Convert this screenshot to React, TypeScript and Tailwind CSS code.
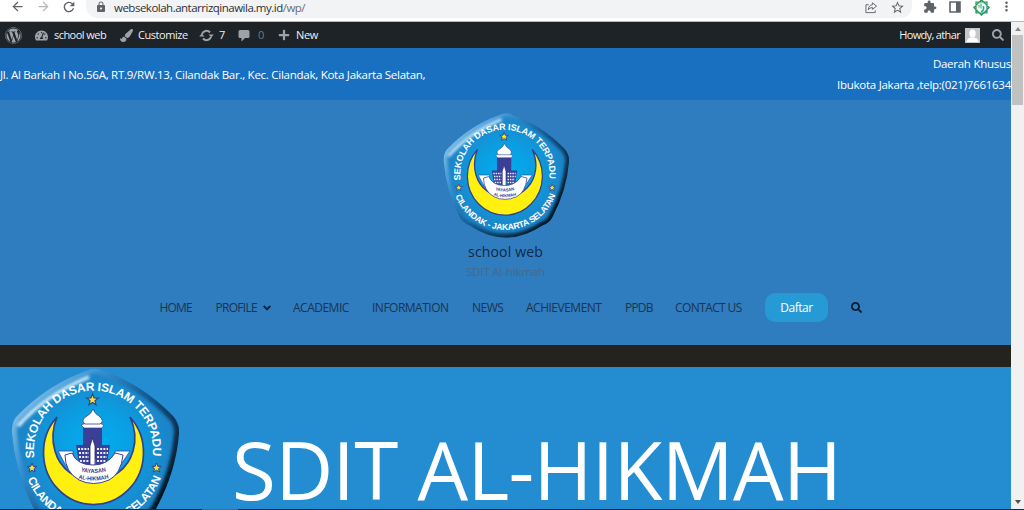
import React from "react";
import { FaWordpress, FaPaintBrush, FaPlus, FaSearch, FaTachometerAlt, FaChevronDown } from "react-icons/fa";
import { MdArrowBack, MdArrowForward, MdRefresh, MdLock, MdExtension, MdMoreVert, MdStarBorder } from "react-icons/md";

const pentagon =
  "M75 4Q84 -1 93 4Q132 18 162 49Q169 57 168 67Q165 104 146 140Q142 148 133 151Q84 184 35 151Q25 147 21 138Q4 104 1 67Q0 55 6 49Q36 18 75 4Z";

function Star({ x, y, r }: { x: number; y: number; r: number }) {
  return (
    <path
      transform={`translate(${x} ${y}) scale(${r})`}
      d="M0-1L.26-.33L.95-.31L.41.13L.59.81L0 .43L-.59.81L-.41.13L-.95-.31L-.26-.33Z"
      fill="#f8e828"
      stroke="#34408f"
      strokeWidth=".2"
    />
  );
}

function Crest({ id, className }: { id: string; className: string }) {
  return (
    <svg viewBox="0 0 168 168" className={className}>
      <defs>
        <radialGradient id={id + "g"} cx=".5" cy=".48" r=".5">
          <stop offset="0" stopColor="#00aeee" />
          <stop offset=".45" stopColor="#0a9fe2" />
          <stop offset=".85" stopColor="#1b87cb" />
          <stop offset="1" stopColor="#1c80c2" />
        </radialGradient>
        <linearGradient id={id + "b"} x1=".1" y1=".15" x2=".9" y2=".8">
          <stop offset="0" stopColor="#7fbfea" />
          <stop offset=".25" stopColor="#3590d0" />
          <stop offset=".55" stopColor="#12588f" />
          <stop offset="1" stopColor="#04131f" />
        </linearGradient>
        <filter id={id + "s"} x="-10%" y="-10%" width="120%" height="120%">
          <feGaussianBlur stdDeviation="1.8" />
        </filter>
        <clipPath id={id + "c"}>
          <path d={pentagon} />
        </clipPath>
        <path id={id + "t"} d="M23.5 91A59.5 59.5 0 1 1 141.5 91" />
        <path id={id + "u"} d="M16.5 112A71.5 71.5 0 0 0 149.5 112" />
      </defs>
      <path d={pentagon} fill={`url(#${id}g)`} />
      <g clipPath={`url(#${id}c)`}>
        <path d={pentagon} fill="none" stroke={`url(#${id}b)`} strokeWidth="10" filter={`url(#${id}s)`} />
        <path d="M7 59Q34 28 78 10" fill="none" stroke="#e4f3fd" strokeWidth="3.5" filter={`url(#${id}s)`} />
      </g>
      <g fill="#fff" fontFamily="Liberation Sans, sans-serif" fontWeight="700">
        <text fontSize="12">
          <textPath href={`#${id}t`} textLength="200" lengthAdjust="spacing">SEKOLAH DASAR ISLAM TERPADU</textPath>
        </text>
        <text fontSize="11.5">
          <textPath href={`#${id}u`} textLength="172" lengthAdjust="spacing">CILANDAK - JAKARTA SELATAN</textPath>
        </text>
      </g>
      <Star x={81.5} y={33} r={6} />
      <Star x={21} y={101} r={5} />
      <Star x={145.5} y={101} r={5} />
      <path d="M46 50A50 52 0 1 0 119 50Q127 67 122 84A40.5 40.5 0 0 1 44 84Q39 67 46 50Z" fill="#fff010" stroke="#34408f" strokeWidth="1.7" />
      <path d="M72 60H91V92H72Z" fill="#3b3f98" />
      <path d="M70 58Q82 52 93 58L91 61H73Z" fill="#fff" stroke="#3b3f98" strokeWidth=".7" />
      <path d="M82 42Q84 47 88 49Q94 54 89 57H74Q69 53 76 49Q80 47 82 42Z" fill="#fff" stroke="#3b3f98" strokeWidth=".8" />
      <path d="M47 84H62V99H55ZM104 84H119L109 99H104Z" fill="#fff" stroke="#3b3f98" strokeWidth=".8" />
      <path d="M65 78H79V97H68ZM85 78H99L96 97H85Z" fill="#3b3f98" />
      <path d="M67 82H78M68 86H78M68 90H78M69 94H78M86 82H97M86 86H97M86 90H96M86 94H95" stroke="#e8edfa" strokeWidth="2" strokeDasharray="2 1.2" />
      <path d="M81.5 71L84 79V99H79V79Z" fill="#fff" stroke="#252a5f" strokeWidth=".8" />
      <path d="M54 88L61 86Q66 98 82 98Q97 98 104 86L112 88Q110 107 98 113Q82 120 68 113Q54 105 54 88Z" fill="#fff" stroke="#3b3f98" strokeWidth="1" />
      <path id={id + "y"} d="M66 103Q82 109 99 103" fill="none" />
      <path id={id + "h"} d="M63 110Q82 117 102 110" fill="none" />
      <g fill="#34408f" fontFamily="Liberation Sans, sans-serif" fontWeight="700" fontSize="5.8">
        <text><textPath href={`#${id}y`} startOffset="50%" textAnchor="middle" textLength="26" lengthAdjust="spacingAndGlyphs">YAYASAN</textPath></text>
        <text><textPath href={`#${id}h`} startOffset="50%" textAnchor="middle" textLength="31" lengthAdjust="spacingAndGlyphs">AL-HIKMAH</textPath></text>
      </g>
    </svg>
  );
}

function BrowserBar() {
  return (
    <div className="flex h-[22px] shrink-0 items-start border-b border-[#b9bbbe] bg-white text-[#5f6368]">
      <MdArrowBack className="ml-[10px] mt-[-1px] size-[15px] shrink-0" />
      <MdArrowForward className="ml-[11px] mt-[-1px] size-[15px] shrink-0 text-[#b5b7ba]" />
      <MdRefresh className="ml-[10px] mt-[-1px] size-[16px] shrink-0" />
      <div className="ml-[9px] flex h-[18px] w-[826px] shrink-0 items-start rounded-b-[12px] bg-[#f1f3f4]">
        <MdLock className="ml-[9px] mt-[1px] size-[12px]" />
        <div className="ml-[7px] text-[11.5px] leading-[15px] tracking-[-0.5px] text-[#303236]">
          websekolah.antarrizqinawila.my.id<span className="text-[#6c7074]">/wp/</span>
        </div>
        <svg viewBox="0 0 14 14" className="ml-auto mt-px size-[13px]" fill="none" stroke="currentColor">
          <path d="M4 4H1V12.5H11V10M8 2L12.5 5.5L8 9V7Q5 7 3.5 9.5Q4 4.5 8 4Z" />
        </svg>
        <MdStarBorder className="ml-[12px] mr-[7px] size-[15px]" />
      </div>
      <MdExtension className="ml-[11px] size-[14px] shrink-0" />
      <svg viewBox="0 0 12 12" className="ml-[12px] mt-[1px] size-[12px] shrink-0">
        <path d="M1 1H11V11H1Z" fill="none" stroke="currentColor" strokeWidth="1.6" />
        <path d="M7 1H11V11H7Z" fill="currentColor" />
      </svg>
      <svg viewBox="0 0 17 17" className="ml-[12px] mt-[-1px] size-[17px] shrink-0">
        <path d="M3 3H14V14H3ZM8.5 .8L16.2 8.5L8.5 16.2L.8 8.5Z" fill="#d8f0e3" stroke="#28905a" strokeWidth="1.2" />
        <circle cx="8.5" cy="8.5" r="5" fill="#fff" stroke="#50b985" strokeWidth=".6" />
        <path d="M10.5 7V10.5Q10 12.5 8 12.5" fill="none" stroke="#16adb0" strokeWidth="1.6" />
        <path d="M8 4.5V9.5M6 6V8.5" stroke="#2c9d4b" strokeWidth="1" />
      </svg>
      <MdMoreVert className="ml-[9px] mt-[-1px] size-[15px] shrink-0" />
    </div>
  );
}

function AdminBar() {
  return (
    <div className="flex h-[26px] shrink-0 items-center bg-[#1d2327] text-[11px] text-[#f0f0f1]">
      <FaWordpress className="ml-[5px] size-[17px] text-[#9ca2a7]" />
      <FaTachometerAlt className="ml-[13px] size-[13px] text-[#9ca2a7]" />
      <span className="ml-[6px] w-[66px] whitespace-nowrap tracking-[-0.55px]">school web</span>
      <FaPaintBrush className="size-[13px] text-[#9ca2a7]" />
      <span className="ml-[5px] w-[61px] whitespace-nowrap tracking-[-0.45px]">Customize</span>
      <svg viewBox="0 0 15 13" className="h-[13px] w-[15px]" fill="none" stroke="#9ca2a7" strokeWidth="2">
        <path d="M3 5A4.7 4.7 0 0 1 11 3.5M12 8A4.7 4.7 0 0 1 4 9.5" />
        <path d="M9.5 5.5H14.8L12.3 8.5ZM.2 7.5H5.5L2.8 4.5Z" fill="#9ca2a7" stroke="none" />
      </svg>
      <span className="ml-[5px] w-[19px]">7</span>
      <svg viewBox="0 0 12 13" className="h-[13px] w-[12px]">
        <path d="M2 1H10Q11.5 1 11.5 2.5V7.5Q11.5 9 10 9H7L3.5 12.5V9H2Q.5 9 .5 7.5V2.5Q.5 1 2 1Z" fill="#9ca2a7" />
      </svg>
      <span className="ml-[8px] w-[20px] text-[#74797e]">0</span>
      <FaPlus className="size-[12px] text-[#9ca2a7]" />
      <span className="ml-[6px] tracking-[-0.4px]">New</span>
      <span className="ml-auto tracking-[-0.65px]">Howdy, athar</span>
      <span className="ml-[5px] flex size-[15px] items-center justify-center bg-[#c5c7c9]">
        <svg viewBox="0 0 15 15" className="size-[15px]" fill="#fff">
          <ellipse cx="7.5" cy="5.5" rx="3.2" ry="4" />
          <path d="M1.5 14Q2 10 6 9.5H9Q13 10 13.5 14Z" />
        </svg>
      </span>
      <FaSearch className="ml-[12px] mr-[7px] size-[12px] text-[#9ca2a7]" />
    </div>
  );
}

function Nav() {
  return (
    <nav className="mt-[13px] flex h-[29px] w-[1011px] items-center whitespace-nowrap pl-[159.5px] text-[12px] tracking-[-0.5px] text-[#1b354e]">
      <span className="w-[56px] tracking-[-0.8px]">HOME</span>
      <span className="w-[47px] tracking-[-0.7px]">PROFILE</span>
      <span className="w-[30.5px]"><FaChevronDown className="size-[8px] stroke-[#0b2136] stroke-[60px] text-[#0b2136]" /></span>
      <span className="w-[79px]">ACADEMIC</span>
      <span className="w-[100px]">INFORMATION</span>
      <span className="w-[54px]">NEWS</span>
      <span className="w-[99px]">ACHIEVEMENT</span>
      <span className="w-[50px] tracking-[-0.8px]">PPDB</span>
      <span className="w-[90px] tracking-[-0.6px]">CONTACT US</span>
      <span className="flex h-[29px] w-[63px] items-center justify-center rounded-[10px] bg-[#269ad4] font-medium tracking-[-0.5px] text-white">Daftar</span>
      <FaSearch className="ml-[23px] size-[11px] text-[#0b1c2b]" />
    </nav>
  );
}

export default function App() {
  return (
    <div className="flex h-[510px] w-[1024px] flex-col overflow-hidden bg-white font-['Open_Sans','Noto_Sans',sans-serif]">
      <BrowserBar />
      <div className="flex h-[487px] shrink-0">
        <main className="flex w-[1011px] shrink-0 flex-col overflow-hidden">
          <AdminBar />
          <div className="flex h-[52px] shrink-0 items-center justify-between bg-[#1a70c0] text-[11.5px] leading-[21px] text-white">
            <p className="whitespace-nowrap tracking-[-0.26px]">Jl. Al Barkah I No.56A, RT.9/RW.13, Cilandak Bar., Kec. Cilandak, Kota Jakarta Selatan,</p>
            <p className="whitespace-nowrap text-right tracking-[-0.26px]">Daerah Khusus<br />Ibukota Jakarta ,telp:(021)7661634</p>
          </div>
          <header className="flex h-[245px] shrink-0 flex-col items-center bg-[#2f7cbf] pt-[12px]">
            <Crest id="a" className="size-[126px] shrink-0" />
            <div className="h-[24px] text-[14px] leading-[27px] tracking-[0.15px] text-[#102a43]">school web</div>
            <div className="h-[18px] text-[11.5px] leading-[19px] tracking-[-0.15px] text-[#47698a]">SDIT Al-hikmah</div>
            <Nav />
          </header>
          <div className="h-[22px] shrink-0 bg-[#24231d]" />
          <section className="flex grow items-start overflow-hidden bg-[#248dd2] pl-[11px]">
            <Crest id="b" className="size-[168px] shrink-0" />
            <h1 className="ml-[53px] mt-[47px] whitespace-nowrap text-[80px] leading-[109px] tracking-[-0.7px] text-white">SDIT AL-HIKMAH</h1>
          </section>
        </main>
        <div className="flex w-[13px] flex-col items-center justify-between bg-[#f1f1f1]">
          <div className="flex flex-col items-center">
            <svg viewBox="0 0 6 4" className="mt-[5px] h-[4px] w-[6px]"><path d="M0 4L3 0L6 4Z" fill="#8a8a8a" /></svg>
            <div className="mt-[4px] h-[70px] w-[11px] bg-[#c1c1c1]" />
          </div>
          <svg viewBox="0 0 6 4" className="mb-[5px] h-[4px] w-[6px]"><path d="M0 0L3 4L6 0Z" fill="#505050" /></svg>
        </div>
      </div>
      <div className="flex h-px shrink-0 bg-[#122b4c]"><div className="ml-[202px] w-[36px] bg-[#52677c]" /></div>
    </div>
  );
}
